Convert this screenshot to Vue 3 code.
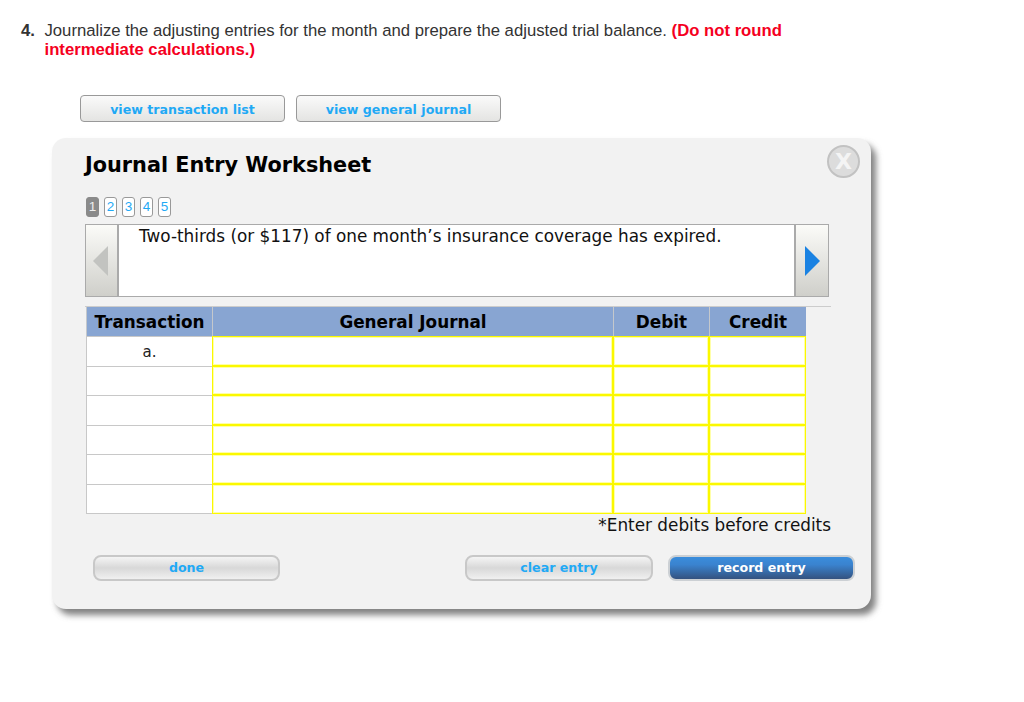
<script setup>
const steps = [1, 2, 3, 4, 5]
const rows = ['a.', '', '', '', '', '']
</script>

<template>
  <div class="page">
    <div class="question">
      <span class="num">4.</span>
      <p class="qtext">Journalize the adjusting entries for the month and prepare the adjusted trial balance. <b class="red">(Do not round intermediate calculations.)</b></p>
    </div>
    <div class="views">
      <button class="view">view transaction list</button>
      <button class="view">view general journal</button>
    </div>
    <section class="panel">
      <h1 class="title">Journal Entry Worksheet</h1>
      <div class="close">X</div>
      <div class="steps">
        <span v-for="s in steps" :key="s" class="step" :class="{ on: s === 1 }">{{ s }}</span>
      </div>
      <div class="slide">
        <div class="arrow">
          <svg class="left-icon" width="16" height="30" viewBox="0 0 16 30"><path d="M15 0V30L0 15Z" fill="#c2c3c0" /></svg>
        </div>
        <div class="slidetext">Two-thirds (or $117) of one month’s insurance coverage has expired.</div>
        <div class="arrow right">
          <svg width="16" height="30" viewBox="0 0 16 30"><path d="M0 0V30L15 15Z" fill="#1a82e2" /></svg>
        </div>
      </div>
      <div class="rule"></div>
      <div class="table">
        <div class="th">Transaction</div>
        <div class="th">General Journal</div>
        <div class="th">Debit</div>
        <div class="th">Credit</div>
        <template v-for="(r, i) in rows" :key="i">
          <div class="td">{{ r }}</div>
          <div class="input"></div>
          <div class="input"></div>
          <div class="input"></div>
        </template>
      </div>
      <div class="note">*Enter debits before credits</div>
      <div class="actions">
        <button class="pill done">done</button>
        <div class="right-actions">
          <button class="pill">clear entry</button>
          <button class="pill primary">record entry</button>
        </div>
      </div>
    </section>
  </div>
</template>

<style>
html, body { margin: 0; background: #fff; }
</style>

<style scoped>
.page {
  width: 1024px;
  height: 702px;
  overflow: hidden;
  box-sizing: border-box;
  padding: 21px 0 0 21px;
  font-family: "DejaVu Sans", sans-serif;
}
.question { display: flex; font: 16.7px/19px "Liberation Sans", Arial, sans-serif; color: #333; }
.num { width: 23.5px; font-weight: bold; }
.qtext { margin: 0; width: 770px; }
.red { color: #f5001e; }
.views { display: flex; gap: 11px; margin: 36px 0 0 59px; }
.view {
  width: 205px;
  height: 27px;
  padding: 1px 0 0;
  border: 1px solid #999;
  border-radius: 4px;
  background: linear-gradient(#fafafa, #e4e4e2);
  color: #1fa9f5;
  font: bold 12.6px "DejaVu Sans", sans-serif;
}
.panel {
  position: relative;
  box-sizing: border-box;
  width: 819px;
  height: 471px;
  margin: 16px 0 0 31px;
  padding: 14px 0 0 33px;
  background: #f2f2f2;
  border-radius: 14px;
  box-shadow: 5px 6px 6px rgba(90, 90, 90, 0.75);
}
.title { margin: 0; font: bold 20.8px/27px "DejaVu Sans", sans-serif; color: #000; }
.close {
  position: absolute;
  top: 7px;
  right: 11px;
  box-sizing: border-box;
  width: 33px;
  height: 33px;
  border: 2px solid #c2c2c2;
  border-radius: 50%;
  background: #dcdcdc;
  color: #f4f4f4;
  font: bold 22px/29px "DejaVu Sans", sans-serif;
  text-align: center;
}
.steps { display: flex; gap: 5px; margin: 18px 0 0 1px; }
.step {
  box-sizing: border-box;
  width: 13px;
  height: 20px;
  border: 1px solid #999;
  border-radius: 3px;
  background: #fff;
  color: #1fa9f5;
  font: 13.5px/18px "Liberation Sans", sans-serif;
  text-align: center;
}
.step.on { background: #8a8a8a; border-color: #8a8a8a; color: #eee; }
.slide {
  display: flex;
  width: 744px;
  height: 73px;
  margin: 7px 0 0 0;
  box-sizing: border-box;
  border: 1px solid #aaa;
  background: #fff;
}
.arrow {
  flex: none;
  display: flex;
  align-items: center;
  justify-content: center;
  box-sizing: border-box;
  width: 33px;
  border-right: 2px solid #aaa;
  background: linear-gradient(#fbfbf8, #cfcfca);
}
.left-icon { margin-left: -1px; }
.arrow.right { width: 34px; border-right: 0; border-left: 2px solid #aaa; padding-left: 2px; }
.slidetext {
  flex: 1;
  padding: 1px 0 0 20px;
  font-size: 16.85px;
  line-height: 21px;
  color: #111;
}
.rule { width: 746px; height: 1px; margin-top: 9px; background: #ccc; }
.table {
  display: grid;
  grid-template-columns: 126px 401px 96px 97px;
  grid-template-rows: 29px repeat(6, 29.6px);
  width: 720px;
  margin-left: 1px;
  box-sizing: border-box;
}
.th {
  display: flex;
  align-items: center;
  justify-content: center;
  padding-top: 1px;
  background: #88a5d2;
  border-left: 1px solid #c4c8cc;
  font-size: 16.85px;
  font-weight: bold;
  color: #000;
}
.td {
  background: #fff;
  border: solid #c8c8c8;
  border-width: 1px 0 0 1px;
  text-align: center;
  font-size: 15px;
  line-height: 30px;
  color: #222;
}
.table > .td:nth-last-child(4) { border-bottom: 1px solid #c8c8c8; }
.input {
  box-sizing: border-box;
  background: #fff;
  border: 1px solid #fbf800;
  box-shadow: inset 0 0 0 1px #ffffa8;
}
.note {
  width: 746px;
  margin-top: 1px;
  text-align: right;
  font-size: 16.85px;
  line-height: 20px;
  color: #111;
}
.actions {
  display: flex;
  justify-content: space-between;
  width: 762px;
  margin: 20px 0 0 8px;
}
.right-actions { display: flex; gap: 15px; }
.pill {
  box-sizing: border-box;
  width: 188px;
  height: 26px;
  padding: 0;
  border: 2px solid #c8c8c8;
  border-radius: 8px;
  background: linear-gradient(#f4f4f4, #d8d8d8 50%, #f0f0f0);
  color: #1fa9f5;
  font: bold 12.6px "DejaVu Sans", sans-serif;
}
.pill.done, .pill.primary { width: 187px; }
.pill.primary {
  border-color: #ccd0d4;
  background: linear-gradient(#3a8ddc, #3a83cf 35%, #34527f);
  color: #fff;
}
</style>
